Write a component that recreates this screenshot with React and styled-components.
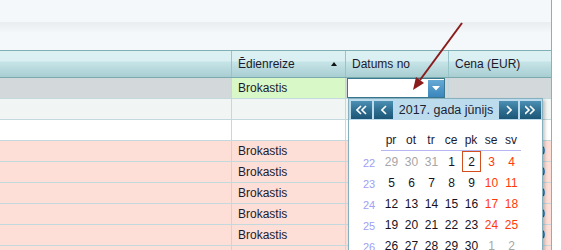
import styled, { createGlobalStyle } from 'styled-components'

const GlobalStyle = createGlobalStyle`
  html, body {
    margin: 0;
    padding: 0;
    overflow: hidden;
    background: #ffffff;
    font-family: "Liberation Sans", Arial, sans-serif;
  }
`

/* grid data */
const columns = [232, 114, 103, 102]

const rows = [
  { type: 'filter' },
  { type: 'odd' },
  { type: 'even' },
  { type: 'pink', meal: 'Brokastis' },
  { type: 'pink', meal: 'Brokastis' },
  { type: 'pink', meal: 'Brokastis' },
  { type: 'pink', meal: 'Brokastis' },
  { type: 'pink', meal: 'Brokastis' },
  { type: 'pink', meal: 'Brokastis' },
]

const rowColors = {
  filter: '#d3d9da',
  odd: '#f1f5f4',
  even: '#ffffff',
  pink: '#fddfd8',
}

/* calendar data */
const dayNames = ['pr', 'ot', 'tr', 'ce', 'pk', 'se', 'sv']

const weeks = [
  { nr: 22, days: [[29, 1], [30, 1], [31, 1], [1], [2, 0, 1], [3], [4]] },
  { nr: 23, days: [[5], [6], [7], [8], [9], [10], [11]] },
  { nr: 24, days: [[12], [13], [14], [15], [16], [17], [18]] },
  { nr: 25, days: [[19], [20], [21], [22], [23], [24], [25]] },
  { nr: 26, days: [[26], [27], [28], [29], [30], [1, 1], [2, 1]] },
  { nr: 27, days: [[3, 1], [4, 1], [5, 1], [6, 1], [7, 1], [8, 1], [9, 1]] },
]

function Chevron({ double, right }) {
  const one = right ? 'M1 1 L5 5 L1 9' : 'M5 1 L1 5 L5 9'
  const two = right ? 'M6 1 L10 5 L6 9' : 'M10 1 L6 5 L10 9'
  return (
    <svg width={double ? 11 : 6} height="10" viewBox={double ? '0 0 11 10' : '0 0 6 10'}>
      <path d={right && double ? 'M0 1 L4 5 L0 9' : one} fill="none" stroke="#fff" strokeWidth="1.6" />
      {double && <path d={right ? 'M5 1 L9 5 L5 9' : two} fill="none" stroke="#fff" strokeWidth="1.6" />}
    </svg>
  )
}

export default function App() {
  return (
    <>
      <GlobalStyle />
      <Page>
        <TopStrip />
        <Toolbar />
        <HeaderRow>
          <HeadCell $w={columns[0]} />
          <HeadCell $w={columns[1]}>
            Ēdienreize
            <SortArrow />
          </HeadCell>
          <HeadCell $w={columns[2]}>Datums no</HeadCell>
          <HeadCell $w={columns[3]} $last>Cena (EUR)</HeadCell>
        </HeaderRow>

        {rows.map((row, i) => (
          <Row key={i} $bg={rowColors[row.type]}>
            <Cell $w={columns[0]} />
            <Cell $w={columns[1]} $bg={row.type === 'filter' ? '#d8f8c8' : null}>
              {row.type === 'filter' ? 'Brokastis' : row.meal}
            </Cell>
            <Cell $w={columns[2]}>
              {row.type === 'filter' && (
                <DateInput>
                  <DropButton>
                    <svg width="8" height="5" viewBox="0 0 8 5">
                      <path d="M0 0 H8 L4 4.5 Z" fill="#fff" />
                    </svg>
                  </DropButton>
                </DateInput>
              )}
            </Cell>
            <Cell $w={columns[3]} $last $right>
              {row.type === 'pink' ? '1.20' : ''}
            </Cell>
          </Row>
        ))}

        <Calendar>
          <CalHeader>
            <NavButton><Chevron double /></NavButton>
            <NavButton $narrow><Chevron /></NavButton>
            <CalTitle>2017. gada jūnijs</CalTitle>
            <NavButton $narrow><Chevron right /></NavButton>
            <NavButton><Chevron double right /></NavButton>
          </CalHeader>
          <CalBody>
            <WeekNr />
            {dayNames.map((d) => (
              <DayName key={d}>{d}</DayName>
            ))}
            {weeks.map((w) => (
              <WeekLine key={w.nr}>
                <WeekNr>{w.nr}</WeekNr>
                {w.days.map(([n, other, today], j) => (
                  <Day key={j} $other={other} $weekend={j > 4} $today={today}>
                    {n}
                  </Day>
                ))}
              </WeekLine>
            ))}
          </CalBody>
        </Calendar>

        <Pointer width="561" height="250" viewBox="0 0 561 250">
          <line x1="462" y1="23" x2="420" y2="80" stroke="#8b1c1c" strokeWidth="2" />
          <polygon points="413,90 424,83 416,77" fill="#8b1c1c" />
        </Pointer>
      </Page>
    </>
  )
}

const Page = styled.div`
  position: relative;
  width: 552px;
  height: 250px;
  overflow: hidden;
  border-right: 1px solid #86b3b8;
  box-sizing: border-box;
  font-size: 12px;
  color: #1c1a2c;
`

const TopStrip = styled.div`
  height: 22px;
  background: #f4f8fb;
`

const Toolbar = styled.div`
  height: 28px;
  background: linear-gradient(to bottom, #e9edef 0%, #f4f8fb 40%, #f4f8fb 100%);
`

const HeaderRow = styled.div`
  display: flex;
  height: 28px;
  box-sizing: border-box;
  border-top: 1px solid #7fb0b5;
  border-bottom: 1px solid #7aa9ae;
  background: linear-gradient(
    to bottom,
    #ddf1f3 0%,
    #d9eff1 38%,
    #c6e4e7 42%,
    #a8ced2 100%
  );
`

const HeadCell = styled.div`
  width: ${({ $w }) => $w}px;
  flex: none;
  box-sizing: border-box;
  display: flex;
  align-items: center;
  justify-content: space-between;
  padding: 0 5px 0 6px;
  border-right: ${({ $last }) => ($last ? 'none' : '1px solid #98c3c8')};
  white-space: nowrap;
`

const SortArrow = styled.span`
  width: 0;
  height: 0;
  border-left: 3.5px solid transparent;
  border-right: 3.5px solid transparent;
  border-bottom: 4px solid #111;
  margin-right: 3px;
`

const Row = styled.div`
  display: flex;
  height: 21px;
  box-sizing: border-box;
  border-bottom: 1px solid #c3d9de;
  background: ${({ $bg }) => $bg};
`

const Cell = styled.div`
  width: ${({ $w }) => $w}px;
  flex: none;
  box-sizing: border-box;
  display: flex;
  align-items: center;
  justify-content: ${({ $right }) => ($right ? 'flex-end' : 'flex-start')};
  padding: ${({ $right }) => ($right ? '0 6px 0 0' : '0 0 0 6px')};
  border-right: ${({ $last }) => ($last ? 'none' : '1px solid #c3d9de')};
  background: ${({ $bg }) => $bg || 'transparent'};
  white-space: nowrap;
`

const DateInput = styled.div`
  position: relative;
  margin-left: -5px;
  width: 98px;
  height: 20px;
  box-sizing: border-box;
  background: #fff;
  border: 1px solid #3a7890;
  display: flex;
  justify-content: flex-end;
  align-items: center;
`

const DropButton = styled.div`
  width: 16px;
  height: 17px;
  display: flex;
  align-items: center;
  justify-content: center;
  background: linear-gradient(to bottom, #66a9d4, #3a86bd);
`

const Calendar = styled.div`
  position: absolute;
  left: 348px;
  top: 98px;
  width: 195px;
  height: 180px;
  box-sizing: border-box;
  background: #fff;
  border: 1px solid #86b0bd;
  box-shadow: 2px 2px 3px rgba(0, 0, 0, 0.22);
`

const CalHeader = styled.div`
  display: flex;
  align-items: center;
  gap: 2px;
  height: 21px;
  padding: 0 1px 0 2px;
  background: #bcdcee;
`

const NavButton = styled.div`
  width: ${({ $narrow }) => ($narrow ? 19 : 21)}px;
  height: 18px;
  flex: none;
  display: flex;
  align-items: center;
  justify-content: center;
  background: linear-gradient(to bottom, #4c90b3 0%, #2f6f92 50%, #1d5676 100%);
`

const CalTitle = styled.div`
  flex: 1;
  text-align: center;
  font-size: 12.5px;
  color: #1c2434;
  white-space: nowrap;
`

const CalBody = styled.div`
  display: grid;
  grid-template-columns: 24px repeat(7, 20px);
  grid-auto-rows: 21px;
  padding: 10px 0 0 8px;
`

const WeekLine = styled.div`
  display: contents;
`

const DayName = styled.div`
  display: flex;
  align-items: center;
  justify-content: center;
  box-sizing: border-box;
  border-bottom: 1px solid #b6b6f2;
  color: #1c1a30;
`

const WeekNr = styled.div`
  display: flex;
  align-items: center;
  justify-content: center;
  padding-top: 2px;
  font-size: 11px;
  color: #a0a0f4;
`

const Day = styled.div`
  display: flex;
  align-items: center;
  justify-content: center;
  box-sizing: border-box;
  margin-left: 1px;
  border: 1px solid ${({ $today }) => ($today ? '#d2501f' : 'transparent')};
  color: ${({ $other, $weekend }) =>
    $other ? '#a6a6a6' : $weekend ? '#ff3a0a' : '#16121e'};
`

const Pointer = styled.svg`
  position: absolute;
  left: 0;
  top: 0;
  pointer-events: none;
`
